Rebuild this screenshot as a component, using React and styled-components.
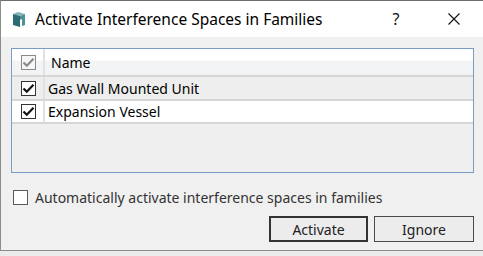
import React from "react";
import styled, { createGlobalStyle } from "styled-components";

const Global = createGlobalStyle`
  html, body { margin: 0; padding: 0; background: #ebebeb; }
  body { font-family: "Segoe UI", "Noto Sans", "Open Sans", sans-serif; }
  * { box-sizing: border-box; }
`;

const Window = styled.div`
  width: 483px;
  height: 251px;
  display: flex;
  flex-direction: column;
  background: #f0f0f0;
  border-top: 1px solid #6e6e6e;
  border-left: 1px solid #8c8c8c;
  border-bottom: 1px solid #8c8c8c;
`;

const TitleBar = styled.div`
  height: 36px;
  flex: none;
  display: flex;
  align-items: center;
  background: #ffffff;
  padding-left: 12px;
`;

const Title = styled.div`
  font-size: 15.5px;
  color: #000;
  margin-left: 10px;
  flex: 1;
  white-space: nowrap;
`;

const TitleButton = styled.div`
  width: 58px;
  height: 36px;
  display: flex;
  align-items: center;
  justify-content: center;
  font-size: 16px;
  color: #111;
`;

const Body = styled.div`
  flex: 1;
  display: flex;
  flex-direction: column;
  padding: 11px 9px 0 10px;
`;

const Grid = styled.div`
  height: 125px;
  border: 1px solid #7b9cc4;
  background: #efefef;
  display: flex;
  flex-direction: column;
`;

const Row = styled.div`
  display: flex;
  height: ${(p) => p.$h}px;
  background: ${(p) => p.$bg};
  border-bottom: 2px solid #d6d6d6;
  flex: none;
`;

const CheckCell = styled.div`
  width: 33px;
  flex: none;
  display: flex;
  align-items: center;
  justify-content: center;
  border-right: 2px solid #e2e2e2;
  padding-left: 1px;
`;

const TextCell = styled.div`
  flex: 1;
  display: flex;
  align-items: center;
  padding-left: ${(p) => p.$pad}px;
  font-size: 14px;
  color: #000;
  white-space: nowrap;
`;

const Box = styled.div`
  width: 15px;
  height: 15px;
  border: 1px solid ${(p) => p.$color};
  background: ${(p) => p.$bg || "#fff"};
  display: flex;
  align-items: center;
  justify-content: center;
`;

const Header = styled(Row)`
  background: linear-gradient(#ffffff 0, #ffffff 11px, #f3f4f6 12px, #f2f3f5 100%);
`;

const OptionRow = styled.label`
  display: flex;
  align-items: center;
  margin-top: 15px;
  padding-left: 2px;
  gap: 7px;
  font-size: 14px;
  color: #333;
  white-space: nowrap;
`;

const Buttons = styled.div`
  display: flex;
  justify-content: flex-end;
  gap: 6px;
  margin-top: 9px;
`;

const Button = styled.div`
  width: ${(p) => p.$w}px;
  height: 26px;
  display: flex;
  align-items: center;
  justify-content: center;
  font-size: 14px;
  color: #222;
  background: #ececec;
  border: ${(p) => (p.$default ? "2px solid #333" : "1px solid #4a4a4a")};
`;

const Check = ({ color }) => (
  <svg width="13" height="11" viewBox="0 0 13 11">
    <path d="M1.5 5.5 L4.8 8.8 L11.5 1.8" fill="none" stroke={color} strokeWidth="2.2" />
  </svg>
);

const Logo = () => (
  <svg width="12" height="15" viewBox="0 0 12 15">
    <path d="M0 2 L5 0 L12 2 L7 4 Z" fill="#7fb3b8" />
    <path d="M0 2 L7 4 L7 15 L0 13 Z" fill="#2e6a72" />
    <path d="M7 4 L12 2 L12 13 L9 14 L9 7 L7 8 Z" fill="#4d9098" />
  </svg>
);

export default function App() {
  return (
    <>
      <Global />
      <Window>
        <TitleBar>
          <Logo />
          <Title>Activate Interference Spaces in Families</Title>
          <TitleButton>?</TitleButton>
          <TitleButton>
            <svg width="12" height="12" viewBox="0 0 12 12">
              <path d="M0.5 0.5 L11.5 11.5 M11.5 0.5 L0.5 11.5" stroke="#111" strokeWidth="1.1" />
            </svg>
          </TitleButton>
        </TitleBar>
        <Body>
          <Grid>
            <Header $h={28} $bg="#fff">
              <CheckCell>
                <Box $color="#8a8a8a" $bg="#f6f6f6">
                  <Check color="#8a8a8a" />
                </Box>
              </CheckCell>
              <TextCell $pad={6}>Name</TextCell>
            </Header>
            <Row $h={24} $bg="#eeeeee">
              <CheckCell>
                <Box $color="#333">
                  <Check color="#111" />
                </Box>
              </CheckCell>
              <TextCell $pad={3}>Gas Wall Mounted Unit</TextCell>
            </Row>
            <Row $h={23} $bg="#ffffff">
              <CheckCell>
                <Box $color="#333">
                  <Check color="#111" />
                </Box>
              </CheckCell>
              <TextCell $pad={3}>Expansion Vessel</TextCell>
            </Row>
          </Grid>
          <OptionRow>
            <Box $color="#5a5a5a" />
            Automatically activate interference spaces in families
          </OptionRow>
          <Buttons>
            <Button $w={99} $default>Activate</Button>
            <Button $w={100}>Ignore</Button>
          </Buttons>
        </Body>
      </Window>
    </>
  );
}
